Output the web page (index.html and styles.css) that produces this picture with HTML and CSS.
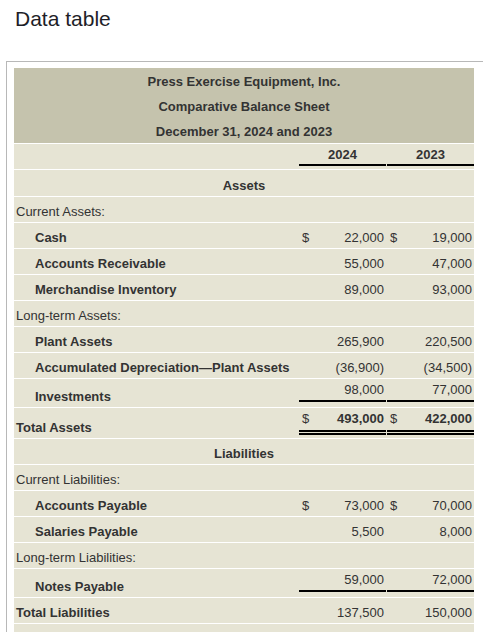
FILE: index.html
```html
<!DOCTYPE html>
<html>
<head>
<meta charset="utf-8">
<title>Data table</title>
<link rel="stylesheet" href="styles.css">
</head>
<body>
<div class="title">Data table</div>
<div class="panel">
  <table class="bs">
    <colgroup><col class="c-label"><col class="c-amt"><col class="c-amt"></colgroup>
    <tbody>
      <tr class="hd"><td colspan="3">Press Exercise Equipment, Inc.</td></tr>
      <tr class="hd"><td colspan="3">Comparative Balance Sheet</td></tr>
      <tr class="hd hd-last"><td colspan="3">December 31, 2024 and 2023</td></tr>
      <tr class="yr"><td></td><td><div class="yr-in">2024</div></td><td><div class="yr-in">2023</div></td></tr>
      <tr class="sec sec-first"><td colspan="3">Assets</td></tr>
      <tr><td class="cat">Current Assets:</td><td></td><td></td></tr>
      <tr><td class="item">Cash</td><td class="amt"><div class="a"><span>$</span><span>22,000</span></div></td><td class="amt"><div class="a"><span>$</span><span>19,000</span></div></td></tr>
      <tr><td class="item">Accounts Receivable</td><td class="amt"><div class="a"><span></span><span>55,000</span></div></td><td class="amt"><div class="a"><span></span><span>47,000</span></div></td></tr>
      <tr><td class="item">Merchandise Inventory</td><td class="amt"><div class="a"><span></span><span>89,000</span></div></td><td class="amt"><div class="a"><span></span><span>93,000</span></div></td></tr>
      <tr><td class="cat">Long-term Assets:</td><td></td><td></td></tr>
      <tr><td class="item">Plant Assets</td><td class="amt"><div class="a"><span></span><span>265,900</span></div></td><td class="amt"><div class="a"><span></span><span>220,500</span></div></td></tr>
      <tr><td class="item">Accumulated Depreciation—Plant Assets</td><td class="amt"><div class="a"><span></span><span>(36,900)</span></div></td><td class="amt"><div class="a"><span></span><span>(34,500)</span></div></td></tr>
      <tr><td class="item">Investments</td><td class="amt ul"><div class="a"><span></span><span>98,000</span></div></td><td class="amt ul"><div class="a"><span></span><span>77,000</span></div></td></tr>
      <tr><td class="cat total">Total Assets</td><td class="amt dbl"><div class="a"><span>$</span><span class="b">493,000</span></div></td><td class="amt dbl"><div class="a"><span>$</span><span class="b">422,000</span></div></td></tr>
      <tr class="sec"><td colspan="3">Liabilities</td></tr>
      <tr><td class="cat">Current Liabilities:</td><td></td><td></td></tr>
      <tr><td class="item">Accounts Payable</td><td class="amt"><div class="a"><span>$</span><span>73,000</span></div></td><td class="amt"><div class="a"><span>$</span><span>70,000</span></div></td></tr>
      <tr><td class="item">Salaries Payable</td><td class="amt"><div class="a"><span></span><span>5,500</span></div></td><td class="amt"><div class="a"><span></span><span>8,000</span></div></td></tr>
      <tr><td class="cat">Long-term Liabilities:</td><td></td><td></td></tr>
      <tr><td class="item">Notes Payable</td><td class="amt ul"><div class="a"><span></span><span>59,000</span></div></td><td class="amt ul"><div class="a"><span></span><span>72,000</span></div></td></tr>
      <tr><td class="cat total">Total Liabilities</td><td class="amt"><div class="a"><span></span><span>137,500</span></div></td><td class="amt"><div class="a"><span></span><span>150,000</span></div></td></tr>
      <tr class="tail"><td colspan="3"></td></tr>
    </tbody>
  </table>
</div>
</body>
</html>
```

FILE: styles.css
```css
html, body {
  overflow: hidden;
}

body {
  margin: 0;
  background: #ffffff;
  font-family: "Liberation Sans", Arial, sans-serif;
  color: #333333;
}

.title {
  padding: 7px 0 0 15px;
  font-size: 21px;
  line-height: 24px;
  color: #1e1e28;
}

.panel {
  margin: 30px 0 0 6px;
  border: 1px solid #b8b8b8;
  border-right: none;
  border-bottom: none;
  padding: 6px 0 0 7px;
}

.bs {
  border-collapse: separate;
  border-spacing: 0;
  width: 460px;
  table-layout: fixed;
  font-size: 13px;
  line-height: 15px;
}

.c-label { width: 284px; }
.c-amt { width: 88px; }

.bs td {
  background: #e6e4d4;
  padding: 7px 0 3px 0;
  vertical-align: bottom;
  border-bottom: 1px solid #ffffff;
  white-space: nowrap;
}

.hd td {
  background: #c5c3ad;
  text-align: center;
  font-weight: bold;
  padding: 6px 0 4px 0;
  border-bottom: none;
}

.hd-last td {
  border-bottom: 1px solid #ffffff;
}

.yr td {
  padding: 3px 0 3px 0;
}

.yr-in {
  margin-left: 1px;
  padding-bottom: 2px;
  border-bottom: 2px solid #000000;
  text-align: center;
  font-weight: bold;
}

.sec td {
  text-align: center;
  font-weight: bold;
}

.sec-first td {
  padding-top: 8px;
}

.tail td {
  height: 15px;
}

.cat {
  padding-left: 2px !important;
}

.total {
  font-weight: bold;
}

.item {
  padding-left: 21px !important;
  font-weight: bold;
}

.bs td.amt {
  vertical-align: top;
}

.a {
  display: flex;
  justify-content: space-between;
  margin-left: 1px;
  padding: 0 2px 0 3px;
}

.bs td.ul {
  padding: 3px 0 5px 0;
}

.ul .a {
  padding-bottom: 3px;
  border-bottom: 2px solid #000000;
}

.bs td.dbl {
  padding: 3px 0 3px 0;
}

.dbl .a {
  padding-bottom: 4px;
  border-bottom: 5px double #000000;
}

.b {
  font-weight: bold;
}
```
